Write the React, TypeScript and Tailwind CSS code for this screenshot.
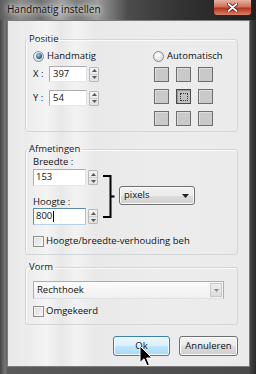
import React from "react";

function Radio({ checked }: { checked?: boolean }) {
  return (
    <span className="flex h-[11px] w-[11px] shrink-0 items-center justify-center rounded-full border border-[#8a8a8a] bg-[radial-gradient(circle_at_40%_35%,#ffffff,#cfcfcf)]">
      {checked && (
        <span className="h-[6px] w-[6px] rounded-full bg-[radial-gradient(circle_at_40%_35%,#9fd0f0,#2a6a96_60%,#173c58)]" />
      )}
    </span>
  );
}

function Checkbox() {
  return (
    <span className="h-[11px] w-[11px] shrink-0 border border-[#8e8f8f] bg-[linear-gradient(135deg,#dcdcdc,#f6f6f6)] shadow-[inset_0_0_0_1px_#f4f4f4]" />
  );
}

function Spinner() {
  return (
    <div className="ml-[2px] flex h-[15px] w-[10px] flex-col rounded-[1px] border border-[#b9b9b9] bg-[linear-gradient(#f4f4f4,#e2e2e2)]">
      <div className="flex flex-1 items-center justify-center border-b border-[#cfcfcf]">
        <svg width="5" height="3" viewBox="0 0 5 3">
          <path d="M0 3L2.5 0L5 3Z" fill="#555" />
        </svg>
      </div>
      <div className="flex flex-1 items-center justify-center">
        <svg width="5" height="3" viewBox="0 0 5 3">
          <path d="M0 0L2.5 3L5 0Z" fill="#555" />
        </svg>
      </div>
    </div>
  );
}

function Group({ title, children, className }: { title: string; children: React.ReactNode; className?: string }) {
  return (
    <fieldset className={`rounded-[3px] border border-[#d2d6d9] px-[1px] shadow-[inset_1px_1px_0_#fbfbfb] ${className ?? ""}`}>
      <legend className="px-[2px] leading-[12px] text-[#1a1a1a]">{title}</legend>
      <div className="px-[6px]">{children}</div>
    </fieldset>
  );
}

export default function App() {
  return (
    <div className="flex h-[374px] w-[256px] flex-col bg-[#2a2a2a] font-['Open_Sans',sans-serif] text-[9.5px] text-[#111]">
      {/* title bar */}
      <div className="flex h-[20px] items-start bg-[linear-gradient(90deg,#5c5c5c_0%,#8c8c8c_8%,#6e6e6e_16%,#a2a2a2_24%,#7a7a7a_30%,#9a9a9a_38%,#4c4c4c_50%,#333_70%,#1e1e1e_100%)] pl-[7px]">
        <span className="mt-[3px] leading-[13px] text-[10px] text-[#101010] [text-shadow:0_0_5px_#ffffff,0_0_8px_#ffffff]">
          Handmatig instellen
        </span>
        <div className="ml-auto mr-[4px] flex h-[16px] w-[39px] items-center justify-center rounded-b-[4px] border border-t-0 border-[#4a1a12] bg-[linear-gradient(#e7b2a3_0%,#d0715a_45%,#b8321c_55%,#d6836a_100%)]">
          <svg width="11" height="9" viewBox="0 0 11 9">
            <path d="M1.5 1L9.5 8M9.5 1L1.5 8" stroke="#3a0f08" strokeWidth="3.2" strokeLinecap="round" />
            <path d="M1.5 1L9.5 8M9.5 1L1.5 8" stroke="#ffffff" strokeWidth="1.8" strokeLinecap="round" />
          </svg>
        </div>
      </div>

      {/* window body */}
      <div className="flex flex-1 bg-[linear-gradient(90deg,#444_0%,#767676_2%,#5a5a5a_3%,#4a4a4a_97%,#2a2a2a_100%)] pb-[7px] pl-[7px] pr-[6px]">
        <div className="flex flex-1 flex-col border border-[#7d7d7d] bg-[linear-gradient(90deg,#e8e8e8_0%,#ececec_8%,#f4f4f4_16%,#e8e8e8_22%,#f3f3f3_28%,#e9e9e9_36%,#ececec_60%,#ebebeb_100%)] pl-[17px] pr-[11px] pt-[12px]">
          {/* Positie */}
          <Group title="Positie" className="pb-[5px]">
            <div className="flex">
              <div className="flex w-[120px] flex-col">
                <div className="mt-[5px] flex h-[12px] items-center gap-[3px]">
                  <Radio checked />
                  <span className="leading-[12px]">Handmatig</span>
                </div>
                <div className="mt-[4px] flex h-[16px] items-center">
                  <span className="w-[16px]">X :</span>
                  <div className="flex h-[16px] w-[38px] items-center border border-[#abadb3] border-b-[#e3e9ef] border-r-[#dbdfe6] bg-white pl-[3px]">
                    397
                  </div>
                  <Spinner />
                </div>
                <div className="mt-[8px] flex h-[16px] items-center">
                  <span className="w-[16px]">Y :</span>
                  <div className="flex h-[16px] w-[38px] items-center border border-[#abadb3] border-b-[#e3e9ef] border-r-[#dbdfe6] bg-white pl-[3px]">
                    54
                  </div>
                  <Spinner />
                </div>
              </div>
              <div className="flex flex-col">
                <div className="mt-[5px] flex h-[12px] items-center gap-[3px]">
                  <Radio />
                  <span className="leading-[12px]">Automatisch</span>
                </div>
                <div className="ml-[1px] mt-[5px] grid grid-cols-[repeat(3,15px)] gap-[7px]">
                  {Array.from({ length: 9 }).map((_, i) =>
                    i === 4 ? (
                      <div
                        key={i}
                        className="flex h-[15px] w-[15px] items-center justify-center border border-[#4a4a4a] bg-[#c2c2c2] shadow-[inset_1px_1px_0_#9a9a9a]"
                      >
                        <div className="h-[8px] w-[8px] border border-dotted border-[#333]" />
                      </div>
                    ) : (
                      <div
                        key={i}
                        className="h-[15px] w-[15px] border border-[#6e6e6e] bg-[#c9c9c9] shadow-[inset_1px_1px_0_#dedede]"
                      />
                    )
                  )}
                </div>
              </div>
            </div>
          </Group>

          {/* Afmetingen */}
          <Group title="Afmetingen" className="mt-[11px] pb-[7px]">
            <div className="flex items-start">
              <div className="flex flex-col">
                <span className="mt-[1px] h-[12px] leading-[12px]">Breedte :</span>
                <div className="mt-[1px] flex items-center">
                  <div className="flex h-[17px] w-[53px] items-center border border-[#abadb3] border-b-[#e3e9ef] border-r-[#dbdfe6] bg-white pl-[2px]">
                    153
                  </div>
                  <Spinner />
                </div>
                <span className="mt-[10px] h-[12px] leading-[12px]">Hoogte :</span>
                <div className="flex items-center">
                  <div className="flex h-[17px] w-[53px] items-center border border-[#5a8bb3] border-b-[#b6d0e6] border-r-[#a9c6df] bg-white pl-[2px]">
                    800<span className="ml-[1px] h-[11px] w-[1px] bg-black" />
                  </div>
                  <Spinner />
                </div>
              </div>
              <svg className="ml-[5px] mt-[20px]" width="12" height="43" viewBox="0 0 12 43">
                <path d="M0 1H7.5V42H0M7.5 21.5H11.5" fill="none" stroke="#000" strokeWidth="2" />
              </svg>
              <div className="ml-[4px] mt-[31px] flex h-[19px] w-[76px] items-center rounded-[3px] border border-[#707070] bg-[linear-gradient(#f2f2f2_0%,#ebebeb_50%,#dddddd_51%,#cfcfcf_100%)] pl-[4px] pr-[5px] shadow-[inset_0_0_0_1px_#fcfcfc]">
                <span className="flex-1">pixels</span>
                <svg width="7" height="4" viewBox="0 0 7 4">
                  <path d="M0 0H7L3.5 4Z" fill="#222" />
                </svg>
              </div>
            </div>
            <div className="mt-[10px] flex h-[12px] items-center gap-[2px] whitespace-nowrap">
              <Checkbox />
              <span>Hoogte/breedte-verhouding beh</span>
            </div>
          </Group>

          {/* Vorm */}
          <Group title="Vorm" className="mt-[6px] pb-[7px]">
            <div className="mt-[8px] flex h-[18px] w-[191px] items-center border border-[#abadb3] border-b-[#dcdfe3] bg-[linear-gradient(#fbfbfb,#f0f0f0)] pl-[3px]">
              <span className="flex-1">Rechthoek</span>
              <div className="mr-[1px] flex h-[14px] w-[12px] items-center justify-center border border-[#c9c9c9] bg-[linear-gradient(#efefef,#dcdcdc)]">
                <svg width="5" height="3" viewBox="0 0 5 3">
                  <path d="M0 0H5L2.5 3Z" fill="#8a8a8a" />
                </svg>
              </div>
            </div>
            <div className="mt-[6px] flex h-[12px] items-center gap-[2px]">
              <Checkbox />
              <span>Omgekeerd</span>
            </div>
          </Group>

          {/* buttons */}
          <div className="mt-[11px] flex justify-end gap-[9px]">
            <div className="relative flex h-[20px] w-[57px] items-center justify-center rounded-[3px] border border-[#3c7fb1] bg-[linear-gradient(#eaf6fd_0%,#d9f0fc_50%,#bee6fd_51%,#a7d9f5_100%)] shadow-[inset_0_0_0_1px_#f2faff]">
              Ok
              <svg className="absolute left-[25px] top-[8px]" width="14" height="23" viewBox="0 0 14 23">
                <path d="M1 1V17.5L5 13.8L8 20.8L10.4 19.7L7.6 13H13Z" fill="#000" stroke="#fff" strokeWidth="1" strokeLinejoin="round" />
              </svg>
            </div>
            <div className="flex h-[20px] w-[59px] items-center justify-center rounded-[3px] border border-[#707070] bg-[linear-gradient(#f2f2f2_0%,#ebebeb_50%,#dddddd_51%,#cfcfcf_100%)] shadow-[inset_0_0_0_1px_#fcfcfc]">
              Annuleren
            </div>
          </div>
        </div>
      </div>
    </div>
  );
}
